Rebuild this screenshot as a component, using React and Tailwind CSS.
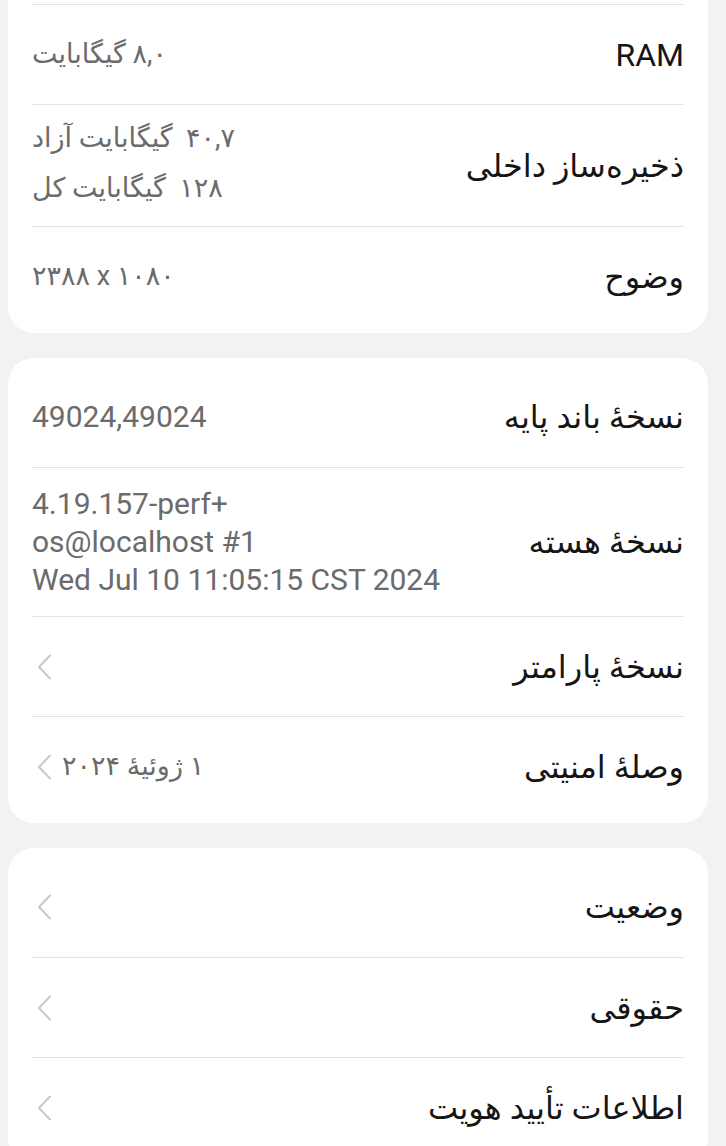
const font = { fontFamily: "Roboto, 'DejaVu Sans', sans-serif" };

function Chevron() {
  return (
    <svg width="20" height="26" viewBox="0 0 20 26" className="shrink-0">
      <path d="M18 1.5 L7 13 L18 24.5" fill="none" stroke="#c9c9c9" strokeWidth="2" strokeLinecap="round" strokeLinejoin="round" />
    </svg>
  );
}

function Row({ label, children, first, arrow, className = 'h-[100px]' }) {
  return (
    <div className={`flex items-center justify-between ${first ? '' : 'border-t border-[#e3e3e3]'} ${className}`}>
      <div className="text-[32px] text-[#151515] leading-none whitespace-nowrap">{label}</div>
      <div className="flex items-center gap-[10px]">
        {children}
        {arrow && <Chevron />}
      </div>
    </div>
  );
}

function Value({ children, dir = 'rtl', latin }) {
  return (
    <span dir={dir} className={`${latin ? 'text-[30px]' : 'text-[27px]'} text-[#6b6b6b] leading-none whitespace-nowrap`}>
      {children}
    </span>
  );
}

export default function App() {
  return (
    <div dir="rtl" style={font} className="min-h-[1146px] bg-[#f1f2f4] pr-[18px] pl-[8px] flex flex-col gap-[25px] pb-10">
      {/* بخش سخت‌افزار */}
      <div className="bg-white rounded-b-[26px] px-6 pt-[4px] pb-[7px]">
        <Row label={<span dir="ltr">RAM</span>} className="h-[100px] border-t border-[#e3e3e3]" first>
          <Value>۸,۰ گیگابایت</Value>
        </Row>
        <Row label="ذخیره‌ساز داخلی" className="h-[122px]">
          <div className="flex flex-col items-end pb-[5px] text-[27px] text-[#6b6b6b] leading-[50px] whitespace-nowrap">
            <span>۴۰,۷&nbsp;&nbsp;گیگابایت آزاد</span>
            <span>۱۲۸&nbsp;&nbsp;گیگابایت کل</span>
          </div>
        </Row>
        <Row label="وضوح">
          <Value dir="ltr">۲۳۸۸ x ۱۰۸۰</Value>
        </Row>
      </div>

      {/* نسخه‌ها */}
      <div className="bg-white rounded-[26px] px-6 pt-[9px] pb-[7px]">
        <Row label="نسخهٔ باند پایه" first>
          <Value dir="ltr" latin>49024,49024</Value>
        </Row>
        <Row label="نسخهٔ هسته" className="h-[149px]">
          <div dir="ltr" className="flex flex-col text-left text-[30px] text-[#6b6b6b] leading-[38px] whitespace-nowrap">
            <span>4.19.157-perf+</span>
            <span>os@localhost #1</span>
            <span>Wed Jul 10 11:05:15 CST 2024</span>
          </div>
        </Row>
        <Row label="نسخهٔ پارامتر" arrow />
        <Row label="وصلهٔ امنیتی" arrow>
          <Value>۱ ژوئیهٔ ۲۰۲۴</Value>
        </Row>
      </div>

      {/* حقوقی */}
      <div className="bg-white rounded-[26px] px-6 pt-[9px] pb-[7px]">
        <Row label="وضعیت" arrow first />
        <Row label="حقوقی" arrow />
        <Row label="اطلاعات تأیید هویت" arrow />
      </div>
    </div>
  );
}
